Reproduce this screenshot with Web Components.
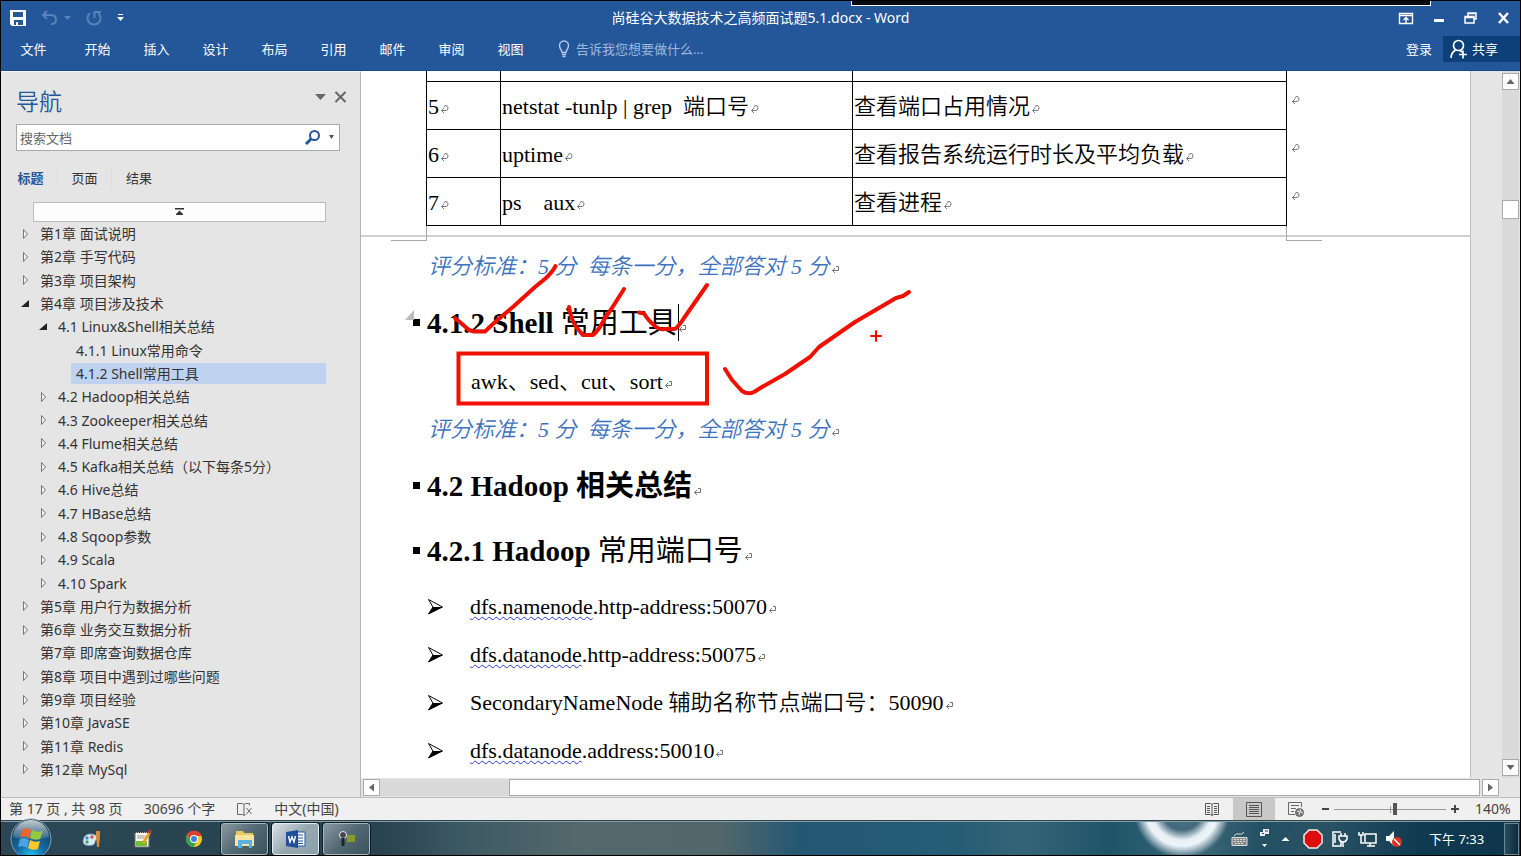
<!DOCTYPE html>
<html lang="zh-CN">
<head>
<meta charset="utf-8">
<title>尚硅谷大数据技术之高频面试题5.1.docx - Word</title>
<style>
html,body{margin:0;height:100%}
body{font:13px/20px "Noto Sans","Noto Sans CJK SC",sans-serif;color:#333}
</style>
</head>
<body>
<word-window></word-window>
<script>
const define = (name, html) => customElements.define(name, class extends HTMLElement {
  constructor() {
    super();
    const t = document.createElement('template');
    t.innerHTML = '<style>*{box-sizing:border-box}button{font:inherit;color:inherit;background:none;border:0;padding:0;margin:0}svg{display:block}</style>' + html.trim();
    this.attachShadow({ mode: 'open' }).append(t.content.cloneNode(true));
  }
});

define('title-bar', `
<style>
:host{display:grid;grid-template-columns:1fr auto 1fr;align-items:center;height:34px;background:#24579a;color:#fff;position:relative}
.quick{display:flex;align-items:center;padding-left:8px;gap:14px;height:26px}
.pair{display:flex;align-items:center;gap:6px}
.win{display:flex;align-items:center;justify-content:flex-end;gap:19px;padding-right:9px;height:26px}
.strip{position:absolute;top:-1px;right:89px;width:580px;height:6px;background:#0a0a14;border:1px solid #fff;border-top-color:#000}
h1{font:inherit;font-size:14px;margin:0}
</style>
<div class="quick">
 <button aria-label="保存"><svg width="18" height="18" viewBox="0 0 18 18"><path d="M1 1h16v16H3l-2-2z" fill="#fff"/><path d="M4 3h10v5H4zM5 11h9v5H5z" fill="#24579a"/><path d="M7 13h2v3H7z" fill="#fff"/></svg></button>
 <span class="pair"><button aria-label="撤消"><svg width="17" height="16" viewBox="0 0 17 16" fill="none" stroke="#5b82b8" stroke-width="2"><path d="M6 1L2 5l4 4M2 5h8q5 0 5 4.500t-5 4.500"/></svg></button>
 <svg width="7" height="5"><path d="M0 0h7L3.500 4z" fill="#5b82b8"/></svg></span>
 <button aria-label="恢复"><svg width="18" height="17" viewBox="0 0 18 17" fill="none" stroke="#5b82b8" stroke-width="2"><path d="M5 3a6.500 6.500 0 1 0 8 0M9.500 8V2H16"/></svg></button>
 <button aria-label="自定义"><svg width="7" height="8"><path d="M1 0h5v1H1zM0 3h7L3.500 7z" fill="#fff"/></svg></button>
</div>
<h1>尚硅谷大数据技术之高频面试题5.1.docx - Word</h1>
<div class="win">
 <button aria-label="功能区显示选项"><svg width="16" height="13" fill="none" stroke="#fff"><path d="M1.500 1.500h13v10h-13zM1 3.500h14M8 11V6M5.500 8L8 5.500 10.500 8" stroke-width="1.400"/></svg></button>
 <button aria-label="最小化"><svg width="12" height="12"><path d="M1 7h10v3H1z" fill="#fff"/></svg></button>
 <button aria-label="还原"><svg width="14" height="12" fill="none" stroke="#fff" stroke-width="1.500"><path d="M4 4V1h8v6h-2M1 4.500h9V11H1zM4 1.500h8M1 5.500h9"/></svg></button>
 <button aria-label="关闭"><svg width="14" height="13"><path d="M2 1l9 10M11 1L2 11" stroke="#fff" stroke-width="2.500"/></svg></button>
</div>
<div class="strip"></div>`);

define('ribbon-tabs', `
<style>
:host{display:flex;align-items:center;height:36px;padding-bottom:8px;background:#24579a;color:#fff;border-bottom:1px solid #1c4a8c}
nav{display:flex}
nav button{width:59px}
nav button:first-child{width:65px;margin-right:2px}
label{display:flex;align-items:center;gap:6px;margin-left:18px;flex:1}
input{font:inherit;color:#fff;background:none;border:0;padding:0;width:200px}
input::placeholder{color:#9fb8da;opacity:1}
.login{margin-right:11px}
.share{display:flex;align-items:center;gap:4px;background:#0d4078;height:26px;width:77px;padding-left:7px}
</style>
<nav><button>文件</button><button>开始</button><button>插入</button><button>设计</button><button>布局</button><button>引用</button><button>邮件</button><button>审阅</button><button>视图</button></nav>
<label><svg width="12" height="18" viewBox="0 0 12 18" fill="none" stroke="#b7cae4" stroke-width="1.400"><path d="M4 12.500C4 10 1.500 9 1.500 5.500a4.500 4.500 0 0 1 9 0C10.500 9 8 10 8 12.500zM4 14.500h4M4.500 16.500h3"/></svg><input placeholder="告诉我您想要做什么..." aria-label="操作说明搜索"></label>
<button class="login">登录</button>
<button class="share"><svg width="18" height="20" viewBox="0 0 18 20" fill="none" stroke="#fff" stroke-width="1.700"><circle cx="8.500" cy="6.500" r="5"/><path d="M1 19c0-4 1.500-6 4.500-8M10 11.500l2 1.500M9 15.500h8M13 11.500v8"/></svg>共享</button>`);

define('nav-item', `
<style>
:host{display:flex;align-items:center;flex:1;min-height:0;padding-left:calc(20px + var(--level,0)*18px);padding-right:34px}
:host([level="1"]){--level:1}
:host([level="2"]){--level:2}
svg{width:9px;height:12px;margin-right:5px;visibility:hidden;overflow:visible}
:host([state="closed"]) .c,:host([state="open"]) .o{visibility:visible}
.o{margin-left:-14px}
a{flex:1;padding-left:5px;font-size:14px;line-height:21px;color:#333;text-decoration:none;white-space:nowrap}
:host([selected]) a{background:#bfd3f0}
</style>
<svg class="c" viewBox="0 0 9 12"><path d="M2.500 1.500L6.500 6l-4 4.500z" fill="#f4f4f4" stroke="#777"/></svg>
<svg class="o" viewBox="0 0 9 12"><path d="M8 2v7H0z" fill="#222"/></svg>
<a href="#"><slot></slot></a>`);

define('nav-pane', `
<style>
:host{display:flex;flex-direction:column;background:#e5e5e5;border-right:1px solid #b5b5b5;border-top:1px solid #f4f4f4}
header{display:flex;align-items:center;padding:8px 13px 0 15px;height:47px;color:#24579a}
h2{font:23px/32px "Noto Sans CJK SC",sans-serif;font-weight:350;margin:0;flex:1}
header button{margin-left:8px;margin-bottom:6px}
.search{display:flex;align-items:center;margin:5px 20px 0 15px;height:27px;background:#fff;border:1px solid #aaa;padding:0 4px 0 3px}
input{flex:1;min-width:0;font:inherit;border:0;padding:0;background:none}
input::placeholder{color:#666;opacity:1}
.search svg{margin-left:6px}
.tabs{display:flex;margin-top:17px;padding-left:3px}
.tabs button{width:54px;border-right:1px solid #dcdcdc}
.tabs button:last-child{border:0}
.tabs .on{color:#24579a;font-weight:700}
.top{height:20px;margin:14px 34px 0 32px;background:#fdfdfd;border:1px solid #bbb;display:flex;align-items:center;justify-content:center}
.tree{flex:1;display:flex;flex-direction:column;padding-bottom:16px;min-height:0}
</style>
<header><h2>导航</h2><button aria-label="选项"><svg width="11" height="6"><path d="M0 0h11L5.500 6z" fill="#666"/></svg></button><button aria-label="关闭"><svg width="13" height="12"><path d="M1.500 1l10 10M11.500 1l-10 10" stroke="#666" stroke-width="2"/></svg></button></header>
<div class="search"><input aria-label="搜索文档" placeholder="搜索文档"><svg width="18" height="17" fill="none" stroke="#24579a"><circle cx="10.500" cy="6.500" r="4.500" stroke-width="2"/><path d="M7 10l-5 5" stroke-width="3"/></svg><svg width="7" height="5"><path d="M1 0h5L3.500 4z" fill="#555"/></svg></div>
<div class="tabs"><button class="on">标题</button><button>页面</button><button>结果</button></div>
<button class="top" aria-label="跳到开头"><svg width="9" height="8"><path d="M0 0h9v1.500H0zM4.500 2.500L8 6H1zM1 6h7v1H1z" fill="#333"/></svg></button>
<div class="tree">
<nav-item state="closed">第1章 面试说明</nav-item>
<nav-item state="closed">第2章 手写代码</nav-item>
<nav-item state="closed">第3章 项目架构</nav-item>
<nav-item state="open">第4章 项目涉及技术</nav-item>
<nav-item level="1" state="open">4.1 Linux&amp;Shell相关总结</nav-item>
<nav-item level="2">4.1.1 Linux常用命令</nav-item>
<nav-item level="2" selected>4.1.2 Shell常用工具</nav-item>
<nav-item level="1" state="closed">4.2 Hadoop相关总结</nav-item>
<nav-item level="1" state="closed">4.3 Zookeeper相关总结</nav-item>
<nav-item level="1" state="closed">4.4 Flume相关总结</nav-item>
<nav-item level="1" state="closed">4.5 Kafka相关总结（以下每条5分）</nav-item>
<nav-item level="1" state="closed">4.6 Hive总结</nav-item>
<nav-item level="1" state="closed">4.7 HBase总结</nav-item>
<nav-item level="1" state="closed">4.8 Sqoop参数</nav-item>
<nav-item level="1" state="closed">4.9 Scala</nav-item>
<nav-item level="1" state="closed">4.10 Spark</nav-item>
<nav-item state="closed">第5章 用户行为数据分析</nav-item>
<nav-item state="closed">第6章 业务交互数据分析</nav-item>
<nav-item>第7章 即席查询数据仓库</nav-item>
<nav-item state="closed">第8章 项目中遇到过哪些问题</nav-item>
<nav-item state="closed">第9章 项目经验</nav-item>
<nav-item state="closed">第10章 JavaSE</nav-item>
<nav-item state="closed">第11章 Redis</nav-item>
<nav-item state="closed">第12章 MySql</nav-item>
</div>`);

define('para-mark', `
<style>:host{display:inline-block;width:9px;height:9px;margin-left:1px;white-space:normal;line-height:0}</style>
<svg width="9" height="9" fill="none" stroke="#777"><path d="M5 1.500h2.500v4H1.500M4 3L1.500 5.500 4 8"/></svg>`);

define('cell-mark', `
<style>:host{display:inline-block;width:9px;height:9px;margin-left:1px;white-space:normal;line-height:0}</style>
<svg width="9" height="9" fill="none" stroke="#777"><path d="M4 2.500Q4 .5 6 .5t2 2.500-2 2.500H1.500M4 3L1.500 5.500 4 8"/></svg>`);

define('doc-heading', `
<style>
:host{display:flex;align-items:center;margin-left:52px;font:700 29px/40px "Liberation Serif","Noto Sans CJK SC",serif;color:#000;white-space:pre}
i{width:7px;height:7px;background:#000;margin-right:7px}
h3{font:inherit;margin:0}
para-mark{margin-top:12px}
</style><i></i><h3><slot></slot></h3><para-mark></para-mark>`);

define('doc-note', `
<style>
:host{display:block;margin-left:67px;color:#3c72be;font-style:italic;white-space:pre}
</style><slot></slot><para-mark></para-mark>`);

define('doc-bullet', `
<style>
:host{display:flex;align-items:center;flex:1;padding-left:66px;white-space:pre}
.a{margin-right:26px}
</style><svg class="a" width="17" height="18"><path d="M1.500 1.500L15.500 9l-14 7L6 9z" fill="#fff" stroke="#000"/><path d="M6 9h9.500l-14 7z" fill="#000"/></svg><span><slot></slot><para-mark></para-mark></span>`);

define('doc-page', `
<style>
:host{display:flex;flex-direction:column;position:relative;background:#fff;border-right:1px solid #c0c0c0;color:#000;font:350 22px/32px "Liberation Serif","Noto Sans CJK SC",serif;overflow:hidden;min-height:0}
table{border-collapse:collapse;table-layout:fixed;width:876px;margin-left:65px}
td{border:1px solid #000;height:48px;padding:4px 0 0 1px;white-space:pre;line-height:32px}
tr:first-child td{height:10px;padding:0;border-top:0;line-height:0}
td:last-child,tr:first-child td:last-child{border:0;line-height:20px;padding:0 0 14px 3px}
tr:first-child td:last-child{padding:0;line-height:0}
.break{display:flex;justify-content:space-between;width:931px;margin-left:30px;height:15px}
.break i{width:36px;border:0 solid #aaa;border-bottom-width:1px}
.break i:first-child{border-right-width:1px}
.break i:last-child{border-left-width:1px}
.gap{background:linear-gradient(#d0d0d0,#d0d0d0) 0 9px/100% 2px no-repeat}
.n1{margin-top:10px}
.h1{margin-top:20px}
.tools{margin:23px 0 0 110px;white-space:pre}
.n2{margin-top:16px}
.h2{margin-top:20px}
.h3{margin-top:25px}
.thin{font-weight:400}
u{text-decoration:underline wavy #2a3bd0;text-decoration-thickness:1px;text-underline-offset:2px}
.list{flex:1;display:flex;flex-direction:column;padding:12px 0 3px}
.ink{position:absolute;left:0;top:0;pointer-events:none}
</style>
<table><colgroup><col style="width:74px"><col style="width:352px"><col style="width:434px"><col></colgroup>
<tr><td></td><td></td><td></td><td></td></tr>
<tr><td>5<cell-mark></cell-mark></td><td>netstat -tunlp | grep  端口号<cell-mark></cell-mark></td><td>查看端口占用情况<cell-mark></cell-mark></td><td><cell-mark></cell-mark></td></tr>
<tr><td>6<cell-mark></cell-mark></td><td>uptime<cell-mark></cell-mark></td><td>查看报告系统运行时长及平均负载<cell-mark></cell-mark></td><td><cell-mark></cell-mark></td></tr>
<tr><td>7<cell-mark></cell-mark></td><td>ps    aux<cell-mark></cell-mark></td><td>查看进程<cell-mark></cell-mark></td><td><cell-mark></cell-mark></td></tr>
</table>
<div class="gap"><div class="break"><i></i><i></i></div></div>
<doc-note class="n1">评分标准：5 分  每条一分，全部答对 5 分</doc-note>
<doc-heading class="h1">4.1.2 Shell <span class="thin">常用工具</span></doc-heading>
<div class="tools">awk、sed、cut、sort<para-mark></para-mark></div>
<doc-note class="n2">评分标准：5 分  每条一分，全部答对 5 分</doc-note>
<doc-heading class="h2">4.2 Hadoop 相关总结</doc-heading>
<doc-heading class="h3">4.2.1 Hadoop <span class="thin">常用端口号</span></doc-heading>
<div class="list">
<doc-bullet><u>dfs.namenode</u>.http-address:50070</doc-bullet>
<doc-bullet><u>dfs.datanode</u>.http-address:50075</doc-bullet>
<doc-bullet>SecondaryNameNode 辅助名称节点端口号：50090</doc-bullet>
<doc-bullet><u>dfs.datanode</u>.address:50010</doc-bullet>
</div>
<svg class="ink" width="700" height="400" viewBox="361 71 700 400" fill="none" stroke="#f01000" stroke-width="4" stroke-linecap="round" stroke-linejoin="round">
<path d="M414 310v10h-9z" fill="#bbb" stroke="none"/>
<path d="M678.500 304v37" stroke="#000" stroke-width="1" stroke-linecap="butt"/>
<path d="M458.500 353.500h248.500v50H458.500z" stroke-linejoin="miter"/>
<path d="M455 318l7 6 7 6 5 1.500h11l9-8.500 20-17 21-19 11-9q8-8 9.500-12"/>
<path d="M569 307q2 12 6 18t8 10h10q6-5 12-17l7-10 12-19"/>
<path d="M639 312.500l5 1q5 8 11 12.500t9 3h11q4-3 9-11l23-33"/>
<path d="M725 369l7 11 10 11q6 4 12 1l8-5 23-13 25-17 9-10 36-25 41-24 7-2 6-4"/>
<path d="M871 336h10M876 331v10" stroke-width="2"/>
</svg>`);

define('scroll-button', `
<style>
:host{display:block;width:17px;height:17px}
button{width:100%;height:100%;background:#fdfdfd;border:1px solid #aaa;display:flex;align-items:center;justify-content:center}
:host([dir="down"]) svg{transform:rotate(180deg)}
:host([dir="left"]) svg{transform:rotate(-90deg)}
:host([dir="right"]) svg{transform:rotate(90deg)}
</style><button aria-label="滚动"><svg width="9" height="5"><path d="M4.500 0L8.500 5h-8z" fill="#666"/></svg></button>`);

define('doc-view', `
<style>
:host{display:grid;grid-template-columns:minmax(0,1fr) 31px 18px;grid-template-rows:minmax(0,1fr) 19px;background:#e5e5e5;min-height:0;min-width:0}
.v{grid-column:3;display:flex;flex-direction:column;padding-top:2px;background:linear-gradient(#dadada,#dadada) 0 0/17px 100% no-repeat;min-height:0}
.v .t{flex:1;padding-top:108px}
.v .t i{display:block;width:17px;height:19px;background:#fff;border:1px solid #aaa}
.v scroll-button{margin-bottom:2px}
.h{grid-column:1/3;display:flex;height:17px;margin:1px 3px 1px 2px}
.h .t{flex:1;background:#dadada;padding-left:129px;margin-right:2px;display:flex}
.h .t i{flex:1;background:#fff;border:1px solid #aaa}
</style>
<doc-page></doc-page><span></span>
<div class="v"><scroll-button></scroll-button><div class="t"><i></i></div><scroll-button dir="down"></scroll-button></div>
<div class="h"><scroll-button dir="left"></scroll-button><div class="t"><i></i></div><scroll-button dir="right"></scroll-button></div>`);

define('status-bar', `
<style>
:host{display:flex;align-items:center;height:24px;background:#f0f0f0;border-top:1px solid #bcbcbc;border-bottom:1px solid #fff;color:#444;font-size:14px;padding:0 9px 0 8px}
.l{display:flex;align-items:center;gap:21px;flex:1}
.r{display:flex;align-items:center;height:100%}
.r button{width:42px;height:100%;display:flex;align-items:center;justify-content:center}
.r .on{background:#c8c8c8}
.r .z{width:17px}
input{appearance:none;width:112px;height:16px;margin:0;background:linear-gradient(#999,#999) 0 8px/100% 1px no-repeat,linear-gradient(#999,#999) 56px 5px/1px 7px no-repeat}
input::-webkit-slider-thumb{appearance:none;width:4px;height:12px;background:#555}
output{width:36px;margin-left:12px}
</style>
<div class="l"><span>第 17 页 , 共 98 页</span><span>30696 个字</span>
<svg width="17" height="15" fill="none" stroke="#666"><path d="M8 2.500v11M8 2.500L6.500 1.500h-5v11h5L8 13.500l1.500-1M8 2.500l1.500-1h4v2M10.500 6l5 6M15.500 6l-5 6"/></svg>
<span>中文(中国)</span></div>
<div class="r">
<button aria-label="阅读视图"><svg width="16" height="15" fill="none" stroke="#555"><path d="M8 2.500v11M8 2.500L6.500 1.500h-5v11h5L8 13.500l1.500-1h5v-11h-5zM3 4.500h3M3 6.500h3M3 8.500h3M3 10.500h3M10 4.500h3M10 6.500h3M10 8.500h3M10 10.500h3"/></svg></button>
<button class="on" aria-label="页面视图"><svg width="16" height="15" fill="none" stroke="#555"><path d="M.5.500h15v14H.5zM3 3.500h10M3 5.500h10M3 7.500h10M3 9.500h10M3 11.500h10"/></svg></button>
<button aria-label="Web 版式"><svg width="16" height="15" fill="none" stroke="#666"><path d="M7 12.500H.5V.5h13V5M3 3.500h8M3 6.500h5M3 9.500h3"/><circle cx="11.500" cy="10.500" r="4" fill="#777"/><path d="M9 9l3 1-1 3M12 7l1 3 2 1" stroke="#eee"/></svg></button>
<button class="z" aria-label="缩小"><svg width="7" height="2"><path d="M0 0h7v2H0z" fill="#444"/></svg></button>
<input type="range" aria-label="缩放" min="0" max="100" value="55">
<button class="z" aria-label="放大"><svg width="8" height="8"><path d="M3 0h2v8H3zM0 3h8v2H0z" fill="#444"/></svg></button>
<output>140%</output></div>`);

define('task-button', `
<style>
:host{display:block;width:47px;height:32px}
button{width:100%;height:100%;display:flex;align-items:center;justify-content:center;border:1px solid #a8b6bc;border-radius:3px;box-shadow:0 0 0 1px #0c2028;background:linear-gradient(135deg,#8998a0,#526872 50%,#3c535e)}
:host([active]) button{background:linear-gradient(135deg,#d8e0e4,#98a8b0 50%,#8ca0aa);border-color:#e5edf0}
</style><button aria-label="任务"><slot></slot></button>`);

define('task-bar', `
<style>
:host{display:flex;align-items:center;height:34px;position:relative;color:#fff;border-top:1px solid #829ea6;box-shadow:0 -1px #31444b;
background:radial-gradient(circle at 1181px -12px,#4f7688 0,#43697c 20px,#e8eff5 30px,#eef4fa 36px,transparent 48px),linear-gradient(90deg,#2b4755 0,#29434f 380px,#3d5962 460px,#53696d 580px,#52676b 720px,#245772 800px,#265d75 960px,#356477 1020px,#1f5468 1110px,#3c6878 1200px,#235063 1260px,#2a5164 1330px,#0f3a50 1420px,#0d364c 100%)}
.orb{width:42px;height:42px;margin:-4px 0 -4px 9px;z-index:1}
.pins{display:flex;gap:31px;margin-left:30px;width:139px;align-items:center}
.run{display:flex;gap:4px}
.tray{display:flex;align-items:center;margin-left:auto;height:100%}
.tray>*{flex:none}
time{width:58px;margin:0 17px 0 26px}
.peek{width:15px;height:32px;border:1px solid #6d8793;background:linear-gradient(90deg,#284d60,#0d2a3c);margin-right:1px}
</style>
<button class="orb" aria-label="开始"><svg width="42" height="42" viewBox="0 0 42 42"><defs><radialGradient id="g" cx=".5" cy=".95" r=".9"><stop offset="0" stop-color="#25c8f5"/><stop offset=".4" stop-color="#166aa5"/><stop offset="1" stop-color="#173750"/></radialGradient><linearGradient id="k" x2="0" y2="1"><stop stop-color="#fff" stop-opacity=".75"/><stop offset="1" stop-color="#fff" stop-opacity=".1"/></linearGradient></defs><circle cx="21" cy="21" r="20" fill="url(#g)" stroke="#7ea0b4"/><path d="M3 19a18 17 0 0 1 36 0q-18 5-36 0" fill="url(#k)"/><path d="M13 11q4-2 8 1l-2 8q-4-3-9-1z" fill="#f0632a"/><path d="M22 12q5 3 11 1l-3 8q-5 2-10-1z" fill="#93c93f"/><path d="M10 21q5-2 9 1l-2 8q-4-3-9-1z" fill="#4ba3e0"/><path d="M20 22q5 3 10 1l-2 8q-6 2-10-1z" fill="#fcc62c"/></svg></button>
<div class="pins">
<svg width="20" height="20"><path d="M1 12Q2 4 10 5q6 1 5 5-2 1-2 3t-2 3Q1 18 1 12z" fill="#d8ecf6" stroke="#6a9cc0"/><circle cx="5" cy="9" r="1.700" fill="#3b8be0"/><circle cx="10" cy="8" r="1.700" fill="#e05030"/><circle cx="5" cy="13" r="1.700" fill="#48a848"/><path d="M14 2h4v5l-1 11h-2L14 7z" fill="#d98b3a"/></svg>
<svg width="20" height="20"><path d="M2 3h14v15H2z" fill="#fafaf0" stroke="#667"/><path d="M2 3h13" stroke="#333" stroke-width="2" stroke-dasharray="1 1"/><path d="M3 12h11v5H3z" fill="#70c030"/><path d="M4 7h8M4 9h7" stroke="#999"/><path d="M17 3L10 14" stroke="#e8a020" stroke-width="3"/><path d="M18 1l-2 3" stroke="#c03030" stroke-width="3"/></svg>
<svg width="20" height="20" viewBox="0 0 20 20"><circle cx="10" cy="10" r="8" fill="#f8c820"/><path d="M3 6a8 8 0 0 1 14.500 1H10L7 12z" fill="#e04030"/><path d="M3 6a8 8 0 0 0 6.500 12L13 12H7z" fill="#35a050"/><circle cx="10" cy="10" r="4" fill="#fff"/><circle cx="10" cy="10" r="3" fill="#3b80e8"/></svg>
</div>
<div class="run">
<task-button><svg width="21" height="20"><path d="M2 2h7l1 2h9v13H2z" fill="#e8c860"/><path d="M1 6h19v11H1z" fill="#f8e6a0"/><path d="M4 11h14v8h-3v-4H8v4H4z" fill="#5ab0e0"/></svg></task-button>
<task-button active><svg width="20" height="20"><path d="M9 3h10v14H9z" fill="#fff" stroke="#2a569a"/><path d="M11 6h6M11 9h6M11 12h6M11 14.500h6" stroke="#2a569a"/><path d="M0 3l12-2v18L0 17z" fill="#1f4f9a"/><path d="M2.500 7l1.500 6L6 8l2 5 1.500-6" fill="none" stroke="#fff" stroke-width="1.400"/></svg></task-button>
<task-button><svg width="18" height="18"><path d="M9 5h8v7H9z" fill="#8a9a28"/><circle cx="5" cy="5" r="3.500" fill="#444" stroke="#eee"/><path d="M5 8v8" stroke="#222" stroke-width="3"/></svg></task-button>
</div>
<div class="tray">
<svg width="17" height="16" fill="none" stroke="#ddd"><path d="M1 6.500h15v8H1z" fill="#888"/><path d="M3 8.500h11M3 10.500h11M4 12.500h8" stroke-dasharray="2 1"/><path d="M3 5q2-3 5-2t5-2"/></svg>
<svg style="margin-left:11px" width="11" height="22"><path d="M4 1h6v5H4zM1 4h5v4H1z" fill="#eee"/><path d="M3 5.500h2M6 3h3" stroke="#245"/><path d="M3 16h5l-2.500 3z" fill="#fff"/></svg>
<svg style="margin-left:11px" width="9" height="6"><path d="M4.500 1L8.500 5h-8z" fill="#fff"/></svg>
<svg style="margin-left:13px" width="20" height="20"><path d="M6 1h8l5 5v8l-5 5H6l-5-5V6z" fill="#db0d0d" stroke="#eee" stroke-width="1.500"/></svg>
<svg style="margin-left:8px" width="18" height="18" fill="none" stroke="#fff" stroke-width="1.500"><path d="M10 2H2v14h8v-4M4 4v9"/><path d="M8 6h8v3q-1 3-4 3t-4-3zM10 6V3M14 6V3M12 12v5"/></svg>
<svg style="margin-left:9px" width="19" height="18" fill="none" stroke="#fff" stroke-width="1.500"><path d="M7 4h11v9H7zM9 16h8M12 13v3M1 2v3h4V2M3 5v8h3"/></svg>
<svg style="margin-left:8px" width="18" height="18"><path d="M1 6h3l5-5v15l-5-5H1z" fill="#fff"/><circle cx="12" cy="12" r="5" fill="#d93020"/><path d="M9 9l6 6" stroke="#fff" stroke-width="1.500"/></svg>
<time>下午 7:33</time><div class="peek"></div></div>`);

define('word-window', `
<style>
:host{display:grid;grid-template-columns:360px minmax(0,1fr);grid-template-rows:auto auto minmax(0,1fr) auto auto;height:100vh;border:1px solid #000;box-sizing:border-box;overflow:hidden}
title-bar,ribbon-tabs,status-bar,task-bar{grid-column:1/-1}
</style>
<title-bar></title-bar><ribbon-tabs></ribbon-tabs><nav-pane></nav-pane><doc-view></doc-view><status-bar></status-bar><task-bar></task-bar>`);
</script>
</body>
</html>
